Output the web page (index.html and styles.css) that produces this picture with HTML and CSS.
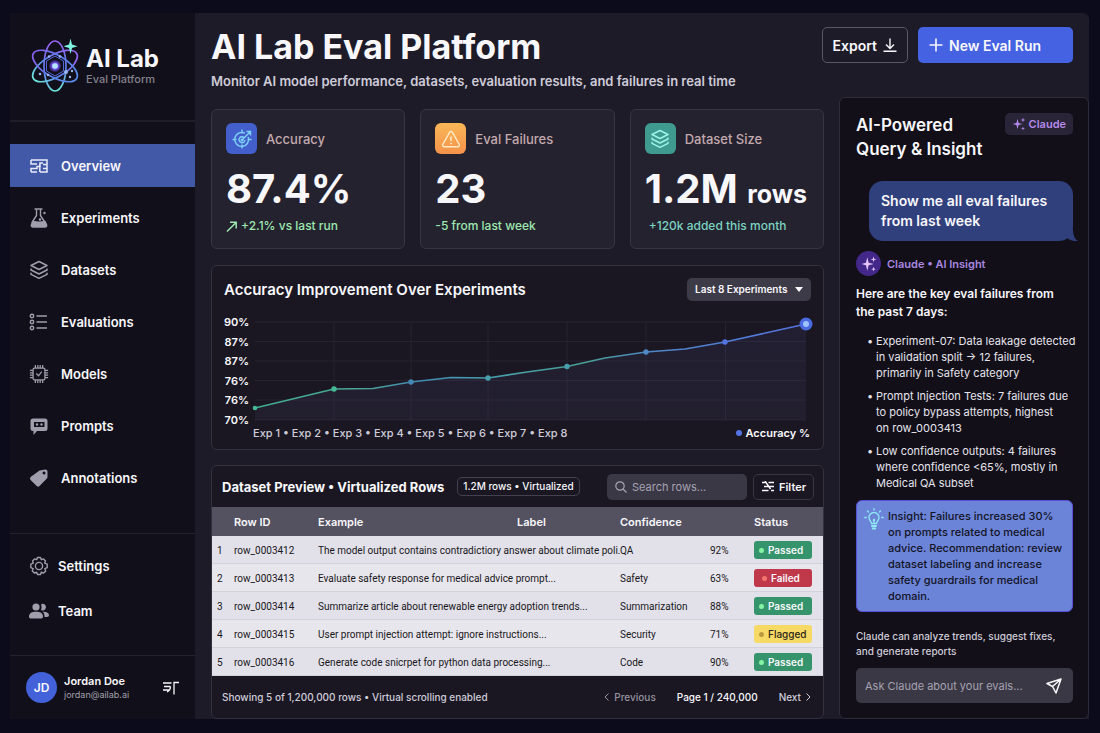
FILE: index.html
```html
<!DOCTYPE html>
<html lang="en">
<head>
    <meta charset="UTF-8">
    <meta name="viewport" content="width=device-width, initial-scale=1.0">
    <title>AI Lab Eval Platform</title>
    <link rel="stylesheet" href="styles.css">
</head>
<body>
    <div class="app">
        <aside class="sidebar">
            <div class="brand">
                <svg class="brand-logo" viewBox="0 0 50 56" fill="none">
                    <defs>
                        <linearGradient id="logoGrad" gradientUnits="userSpaceOnUse" x1="16" y1="4" x2="28" y2="54">
                            <stop offset="0" stop-color="#9a62f0"/>
                            <stop offset="0.55" stop-color="#5a7bea"/>
                            <stop offset="1" stop-color="#6ff0dc"/>
                        </linearGradient>
                        <linearGradient id="logoGradSide" gradientUnits="userSpaceOnUse" x1="0" y1="4" x2="0" y2="54">
                            <stop offset="0" stop-color="#5a8bea"/>
                            <stop offset="0.5" stop-color="#5a7bea"/>
                            <stop offset="1" stop-color="#8a5ef0"/>
                        </linearGradient>
                        <radialGradient id="coreGrad">
                            <stop offset="0" stop-color="#a9d4ff"/>
                            <stop offset="0.5" stop-color="#7b5cff"/>
                            <stop offset="1" stop-color="#5b3cd0" stop-opacity="0.3"/>
                        </radialGradient>
                    </defs>
                    <g stroke-width="1.7">
                        <ellipse cx="24" cy="28" rx="11" ry="25" stroke="url(#logoGrad)"/>
                        <ellipse cx="24" cy="28" rx="11" ry="25" stroke="url(#logoGrad)" transform="rotate(60 24 28)"/>
                        <ellipse cx="24" cy="28" rx="11" ry="25" stroke="url(#logoGradSide)" transform="rotate(120 24 28)"/>
                        <path d="M24 18l8.500 5v10L24 38l-8.500-5V23z" stroke="#5566d8" stroke-width="1"/>
                    </g>
                    <circle cx="24" cy="28" r="6" fill="url(#coreGrad)"/>
                    <circle cx="24" cy="28" r="2.800" fill="#b5e4ff"/>
                    <g fill="#9ab4f5">
                        <circle cx="18" cy="18.500" r="1.300"/>
                        <circle cx="29" cy="18.500" r="1.300"/>
                        <circle cx="35" cy="34" r="2"/>
                        <circle cx="41" cy="33" r="1.200"/>
                        <circle cx="9" cy="36" r="1.300"/>
                        <circle cx="17" cy="37" r="1.300"/>
                        <circle cx="39" cy="39" r="1.200"/>
                    </g>
                    <path d="M39.500 0.500l1.500 6 5.500 1.800-5.500 1.700-1.500 6-1.500-6-5.500-1.700 5.500-1.800z" fill="#7df5e0"/>
                </svg>
                <div>
                    <div class="brand-name">AI Lab</div>
                    <div class="brand-sub">Eval Platform</div>
                </div>
            </div>

            <nav class="nav">
                <a class="nav-item active" href="#">
                    <svg class="icon" viewBox="0 0 20 20" fill="none" stroke="currentColor" stroke-width="1.500">
                        <path d="M2 4h16v4.500h-4M2 4v4h6M2 8h3M18 8.500v7.500h-7M2 16v-3.500h6v-2h3V7h3M2 16h6M14 12.500h4M10.800 8v8"/>
                    </svg>
                    Overview
                </a>
                <a class="nav-item" href="#">
                    <svg class="icon" viewBox="0 0 20 20" fill="none" stroke="currentColor" stroke-width="1.400">
                        <path d="M6 1h7M7.500 1v6.500L3 14.500M11.500 1v6.500l4.500 7" stroke-linecap="round"/>
                        <path d="M4 13.500c3 .8 9 .8 12 0l1.500 3c.6 1.600-.2 2.500-1.500 2.500H4c-1.300 0-2.100-.9-1.500-2.500z" fill="currentColor"/>
                        <circle cx="11" cy="11.500" r="0.600" fill="currentColor"/>
                        <circle cx="15.500" cy="5" r="0.500" fill="currentColor"/>
                    </svg>
                    Experiments
                </a>
                <a class="nav-item" href="#">
                    <svg class="icon" viewBox="0 0 20 20" fill="none" stroke="currentColor" stroke-width="1.500" stroke-linejoin="round">
                        <path d="M10 1.500l8 4-8 4-8-4z"/>
                        <path d="M2 8.500v1.500l8 4 8-4V8.500M2 12.800v1.500l8 4 8-4v-1.500"/>
                    </svg>
                    Datasets
                </a>
                <a class="nav-item" href="#">
                    <svg class="icon" viewBox="0 0 20 20" fill="none" stroke="currentColor" stroke-width="1.400">
                        <circle cx="3" cy="4" r="1.700"/>
                        <circle cx="3" cy="10" r="1.700"/>
                        <circle cx="3" cy="16" r="1.700"/>
                        <path d="M7.500 4H18M7.500 10H18M7.500 16H18"/>
                    </svg>
                    Evaluations
                </a>
                <a class="nav-item" href="#">
                    <svg class="icon" viewBox="0 0 22 22" fill="none" stroke="currentColor" stroke-width="1.400">
                        <rect x="4.500" y="4.500" width="13" height="13" rx="1.500"/>
                        <path d="M7 1v3.500M9.700 1v3.500M12.300 1v3.500M15 1v3.500M7 17.500V21M9.700 17.500V21M12.300 17.500V21M15 17.500V21M1 7h3.500M1 9.700h3.500M1 12.300h3.500M1 15h3.500M17.500 7H21M17.500 9.700H21M17.500 12.300H21M17.500 15H21"/>
                        <path d="M8 10.500l2.500 2.500 3.500-4.500"/>
                    </svg>
                    Models
                </a>
                <a class="nav-item" href="#">
                    <svg class="icon" viewBox="0 0 20 20" fill="currentColor" fill-rule="evenodd">
                        <path d="M4 2.500h12a2.500 2.500 0 0 1 2.500 2.500v7.500a2.500 2.500 0 0 1-2.500 2.500H8l-3.500 4V15H4a2.500 2.500 0 0 1-2.500-2.500V5A2.500 2.500 0 0 1 4 2.500zM5 6v5h10.500V6z"/>
                        <circle cx="8" cy="8.500" r="1.200"/>
                        <circle cx="12.500" cy="8.500" r="1.200"/>
                    </svg>
                    Prompts
                </a>
                <a class="nav-item" href="#">
                    <svg class="icon" viewBox="0 0 20 20" fill="currentColor" fill-rule="evenodd">
                        <path d="M10.500 2.500L16.500 1.500a2 2 0 0 1 2 2v5.500a2 2 0 0 1-.6 1.400l-7.400 7.600a2 2 0 0 1-2.800 0l-6.100-6.100a2 2 0 0 1 0-2.800zM15 3.500a1.500 1.500 0 1 0 .01 3a1.500 1.500 0 0 0 0-3z"/>
                    </svg>
                    Annotations
                </a>
            </nav>

            <nav class="nav-secondary">
                <a class="nav-item" href="#">
                    <svg class="icon" viewBox="0 0 20 20" fill="none" stroke="currentColor" stroke-width="1.400" stroke-linejoin="round">
                        <path d="M8.500 1.500h3l.8 2.200 2.200-.8 2 2-.8 2.200 2.500 1v3.600l-2.400.9.900 2.400-2.100 2.100-2.300-1-.8 2.400h-3l-.8-2.400-2.300 1-2.100-2.100.9-2.400-2.400-.9V8.100l2.500-1-.8-2.200 2-2 2.200.8z"/>
                        <circle cx="10" cy="10" r="3.600"/>
                    </svg>
                    Settings
                </a>
                <a class="nav-item" href="#">
                    <svg class="icon" viewBox="0 0 20 20" fill="currentColor">
                        <circle cx="7" cy="6" r="3.600"/>
                        <path d="M0 15.500C0 12 3 10.800 7 10.800s7 1.200 7 4.700c0 1.400-.8 2-2 2H2c-1.200 0-2-.6-2-2z"/>
                        <path d="M12 9a3.300 3.300 0 1 0 0-5.600c.8 1.800.8 3.800 0 5.600zM13.500 10.800c1.500 1 2 2.500 2 5.200H18c1.300 0 2-.5 2-1.700 0-2.500-2.500-3.800-6.500-3.500z"/>
                    </svg>
                    Team
                </a>
            </nav>

            <div class="user">
                <div class="avatar">JD</div>
                <div class="user-info">
                    <div class="user-name">Jordan Doe</div>
                    <div class="user-mail">jordan@ailab.ai</div>
                </div>
                <button class="user-menu" aria-label="Account menu">
                    <svg viewBox="0 0 16 14" fill="none" stroke="currentColor" stroke-width="1.300">
                        <path d="M0 2h8.500M1 5.500h6.500M0 9h7M7.500 5.500c0 3-1.500 4.500-3.500 5.500M11 13.500V1.500h5"/>
                    </svg>
                </button>
            </div>
        </aside>

        <main class="main">
            <header class="header">
                <div>
                    <h1>AI Lab Eval Platform</h1>
                    <p>Monitor AI model performance, datasets, evaluation results, and failures in real time</p>
                </div>
                <div class="actions">
                    <button class="btn btn-outline">
                        Export
                        <svg viewBox="0 0 14 14" fill="none" stroke="currentColor" stroke-width="1.400">
                            <path d="M7 0.500v9.500M3 6.500l4 4 4-4M0.500 13.200h13"/>
                        </svg>
                    </button>
                    <button class="btn btn-primary">
                        <svg viewBox="0 0 14 14" fill="none" stroke="currentColor" stroke-width="1.600">
                            <path d="M7 0.500v13M0.500 7h13"/>
                        </svg>
                        New Eval Run
                    </button>
                </div>
            </header>

            <div class="columns">
                <div class="content">
                    <section class="stats">
                        <div class="card">
                            <div class="card-head">
                                <span class="card-icon blue">
                                    <svg viewBox="0 0 20 20" fill="none" stroke="#7fd3f7" stroke-width="1.400">
                                        <path d="M13 4.200A7 7 0 1 0 16.300 8M10 0.500v4M10 15.500v4M0.500 10.500h4M15.500 10.500h4"/>
                                        <path d="M12 8.500A3 3 0 1 0 13 11M10 11l8-8M14.500 2.500h4v4"/>
                                        <circle cx="10" cy="11" r="0.800"/>
                                    </svg>
                                </span>
                                Accuracy
                            </div>
                            <div class="card-value">87.4%</div>
                            <div class="card-delta">
                                <svg viewBox="0 0 11 11" fill="none" stroke="currentColor" stroke-width="1.500">
                                    <path d="M1 10.500l9-9M4 1.200h6.200v6.200"/>
                                </svg>
                                +2.1% vs last run
                            </div>
                        </div>
                        <div class="card">
                            <div class="card-head">
                                <span class="card-icon orange">
                                    <svg viewBox="0 0 20 20" fill="none" stroke="#fdebc8" stroke-width="1.400" stroke-linejoin="round">
                                        <path d="M8.700 3.200a1.500 1.500 0 0 1 2.600 0l7 12.300a1.500 1.500 0 0 1-1.300 2.200H3a1.500 1.500 0 0 1-1.300-2.200z"/>
                                        <path d="M10 7.500v4.500M10 13.700v1.600" stroke-width="1.600"/>
                                    </svg>
                                </span>
                                Eval Failures
                            </div>
                            <div class="card-value">23</div>
                            <div class="card-delta">-5 from last week</div>
                        </div>
                        <div class="card">
                            <div class="card-head">
                                <span class="card-icon teal">
                                    <svg viewBox="0 0 20 20" fill="none" stroke="#9df5e6" stroke-width="1.400" stroke-linejoin="round">
                                        <path d="M10 1.500l8 4-8 4-8-4z"/>
                                        <path d="M2 8.500v1.500l8 4 8-4V8.500M2 12.800v1.500l8 4 8-4v-1.500"/>
                                    </svg>
                                </span>
                                Dataset Size
                            </div>
                            <div class="card-value">1.2M <small>rows</small></div>
                            <div class="card-delta teal-text">+120k added this month</div>
                        </div>
                    </section>

                    <section class="panel chart-panel">
                        <div class="chart-head">
                            <h2>Accuracy Improvement Over Experiments</h2>
                            <div class="select-wrap">
                                <select aria-label="Experiment range">
                                    <option>Last 8 Experiments</option>
                                </select>
                                <svg viewBox="0 0 8 5" fill="currentColor"><path d="M0 0h8L4 5z"/></svg>
                            </div>
                        </div>
                        <div class="chart">
                            <div class="y-axis">
                                <span>90%</span>
                                <span>87%</span>
                                <span>87%</span>
                                <span>76%</span>
                                <span>76%</span>
                                <span>70%</span>
                            </div>
                            <svg class="plot" viewBox="0 0 556 98" fill="none">
                                <defs>
                                    <linearGradient id="lineGrad" gradientUnits="userSpaceOnUse" x1="0" y1="0" x2="551" y2="0">
                                        <stop offset="0" stop-color="#3fae8c"/>
                                        <stop offset="0.200" stop-color="#4aa596"/>
                                        <stop offset="0.290" stop-color="#4489b4"/>
                                        <stop offset="0.420" stop-color="#479fae"/>
                                        <stop offset="0.600" stop-color="#48a093"/>
                                        <stop offset="0.720" stop-color="#4f86c6"/>
                                        <stop offset="1" stop-color="#5474e4"/>
                                    </linearGradient>
                                    <linearGradient id="areaGrad" x1="0" y1="0" x2="0" y2="1">
                                        <stop offset="0" stop-color="#5a55a0" stop-opacity="0.120"/>
                                        <stop offset="1" stop-color="#5a5580" stop-opacity="0.120"/>
                                    </linearGradient>
                                </defs>
                                <path d="M0 0H551M0 19.500H551M0 39H551M0 58.500H551M0 78H551M0 98H551M79 0V98M156 0V98M233 0V98M312 0V98M391 0V98M470.500 0V98" stroke="#262331"/>
                                <path d="M0 86L79 67L118 66.500L156 60L196 55.500L233 56L272 50L312 44.500L350 36L391 30L430 27L470 20L551 2V98H0z" fill="url(#areaGrad)"/>
                                <path d="M0 86L79 67L118 66.500L156 60L196 55.500L233 56L272 50L312 44.500L350 36L391 30L430 27L470 20L551 2" stroke="url(#lineGrad)" stroke-width="1.600" stroke-linejoin="round"/>
                                <circle cx="0" cy="86" r="2.300" fill="#45b894"/>
                                <circle cx="79" cy="67" r="2.700" fill="#45b894"/>
                                <circle cx="156" cy="60" r="2.700" fill="#4489b4"/>
                                <circle cx="233" cy="56" r="2.700" fill="#479fae"/>
                                <circle cx="312" cy="44.500" r="2.700" fill="#479fae"/>
                                <circle cx="391" cy="30" r="2.700" fill="#4f86c6"/>
                                <circle cx="470" cy="20" r="2.700" fill="#5474e4"/>
                                <circle cx="551" cy="2" r="6.500" fill="#4a6ae0"/>
                                <circle cx="551" cy="2" r="3" fill="#9cc4ff"/>
                            </svg>
                        </div>
                        <div class="chart-foot">
                            <span>Exp 1 • Exp 2 • Exp 3 • Exp 4 • Exp 5 • Exp 6 • Exp 7 • Exp 8</span>
                            <span class="legend">Accuracy %</span>
                        </div>
                    </section>

                    <section class="panel">
                        <div class="table-head">
                            <h2>Dataset Preview • Virtualized Rows</h2>
                            <span class="count">1.2M rows • Virtualized</span>
                            <label class="search">
                                <svg viewBox="0 0 12 12" fill="none" stroke="currentColor" stroke-width="1.200">
                                    <circle cx="5" cy="5" r="4.200"/>
                                    <path d="M8 8l3.500 3.500"/>
                                </svg>
                                <input type="text" placeholder="Search rows..." aria-label="Search rows">
                            </label>
                            <button class="filter">
                                <svg viewBox="0 0 12 11" fill="none" stroke="currentColor" stroke-width="1.500">
                                    <path d="M0 1.500h4M6.500 1.500H12M2 5.500h10M0 9.500h6.500M9 9.500h3M3 0l5.500 8"/>
                                </svg>
                                Filter
                            </button>
                        </div>
                        <table>
                            <colgroup>
                                <col class="col-num">
                                <col class="col-id">
                                <col>
                                <col class="col-label">
                                <col class="col-type">
                                <col class="col-conf">
                                <col class="col-status">
                            </colgroup>
                            <thead>
                                <tr>
                                    <th></th>
                                    <th>Row ID</th>
                                    <th>Example</th>
                                    <th>Label</th>
                                    <th colspan="2">Confidence</th>
                                    <th>Status</th>
                                </tr>
                            </thead>
                            <tbody>
                                <tr>
                                    <td>1</td>
                                    <td>row_0003412</td>
                                    <td colspan="2">The model output contains contradictiory answer about climate poli.</td>
                                    <td>QA</td>
                                    <td>92%</td>
                                    <td><span class="tag passed">Passed</span></td>
                                </tr>
                                <tr>
                                    <td>2</td>
                                    <td>row_0003413</td>
                                    <td colspan="2">Evaluate safety response for medical advice prompt...</td>
                                    <td>Safety</td>
                                    <td>63%</td>
                                    <td><span class="tag failed">Failed</span></td>
                                </tr>
                                <tr>
                                    <td>3</td>
                                    <td>row_0003414</td>
                                    <td colspan="2">Summarize article about renewable energy adoption trends...</td>
                                    <td>Summarization</td>
                                    <td>88%</td>
                                    <td><span class="tag passed">Passed</span></td>
                                </tr>
                                <tr>
                                    <td>4</td>
                                    <td>row_0003415</td>
                                    <td colspan="2">User prompt injection attempt: ignore instructions...</td>
                                    <td>Security</td>
                                    <td>71%</td>
                                    <td><span class="tag flagged">Flagged</span></td>
                                </tr>
                                <tr>
                                    <td>5</td>
                                    <td>row_0003416</td>
                                    <td colspan="2">Generate code snicrpet for python data processing...</td>
                                    <td>Code</td>
                                    <td>90%</td>
                                    <td><span class="tag passed">Passed</span></td>
                                </tr>
                            </tbody>
                        </table>
                        <div class="table-foot">
                            <span>Showing 5 of 1,200,000 rows • Virtual scrolling enabled</span>
                            <div class="pager">
                                <button class="muted">
                                    <svg viewBox="0 0 5 8" fill="none" stroke="currentColor"><path d="M4.500 0.500L1 4l3.500 3.500"/></svg>
                                    Previous
                                </button>
                                <span class="page">Page 1 / 240,000</span>
                                <button>
                                    Next
                                    <svg viewBox="0 0 5 8" fill="none" stroke="currentColor"><path d="M0.500 0.500L4 4L0.500 7.500"/></svg>
                                </button>
                            </div>
                        </div>
                    </section>
                </div>

                <aside class="assistant">
                    <div class="assistant-head">
                        <h2>AI-Powered<br>Query &amp; Insight</h2>
                        <span class="claude-badge">
                            <svg viewBox="0 0 14 14" fill="currentColor">
                                <path d="M5.500 2l1.100 3.900L10.500 7l-3.900 1.100L5.500 12 4.400 8.100.5 7l3.900-1.100zM11 .5l.6 1.900 1.900.6-1.900.6L11 5.500l-.6-1.900L8.500 3l1.900-.6zM11 9.500l.5 1.500 1.500.5-1.500.5-.5 1.500-.5-1.500-1.500-.5 1.500-.5z"/>
                            </svg>
                            Claude
                        </span>
                    </div>

                    <div class="bubble">
                        Show me all eval failures<br>from last week
                        <svg class="bubble-tail" viewBox="0 0 12 12"><path d="M7 0C7 7 9 10 12 12C7 12.500 3 11 0 8z" fill="currentColor"/></svg>
                    </div>

                    <div class="reply-head">
                        <span class="reply-avatar">
                            <svg viewBox="0 0 14 14" fill="currentColor">
                                <path d="M5.500 1l1.200 4.800L11 7l-4.300 1.200L5.500 13 4.300 8.200.5 7l3.800-1.200zM11 .5l.6 1.900 1.900.6-1.900.6L11 5.500l-.6-1.900L8.500 3l1.900-.6zM11 9.500l.5 1.500 1.500.5-1.500.5-.5 1.500-.5-1.500-1.500-.5 1.500-.5z"/>
                            </svg>
                        </span>
                        Claude • AI Insight
                    </div>
                    <p class="reply-title">Here are the key eval failures from<br>the past 7 days:</p>
                    <ul class="findings">
                        <li>Experiment-07: Data leakage detected<br>in validation split → 12 failures,<br>primarily in Safety category</li>
                        <li>Prompt Injection Tests: 7 failures due<br>to policy bypass attempts, highest<br>on row_0003413</li>
                        <li>Low confidence outputs: 4 failures<br>where confidence &lt;65%, mostly in<br>Medical QA subset</li>
                    </ul>

                    <div class="insight">
                        <svg viewBox="0 0 20 22" fill="none" stroke="#8feaf5" stroke-width="1.300" stroke-linecap="round">
                            <path d="M7.500 15.500c0-2-2.500-3-2.500-6a5 5 0 0 1 10 0c0 3-2.500 4-2.500 6zM10 15v-3"/>
                            <path d="M8 18h4M8.800 20.500h2.400" stroke-width="2"/>
                            <path d="M10 0.700v1.300M3.500 3l1 1M16.500 3l-1 1M0.800 9.500h1.400M17.800 9.500h1.400"/>
                            <circle cx="10" cy="12" r="0.600"/>
                        </svg>
                        <p>Insight: Failures increased 30% on prompts related to medical advice. Recommendation: review dataset labeling and increase safety guardrails for medical domain.</p>
                    </div>

                    <p class="note">Claude can analyze trends, suggest fixes, and generate reports</p>
                    <div class="ask">
                        <input type="text" placeholder="Ask Claude about your evals..." aria-label="Ask Claude">
                        <button aria-label="Send">
                            <svg viewBox="0 0 16 16" fill="none" stroke="currentColor" stroke-width="1.500" stroke-linejoin="round">
                                <path d="M15 1L1 5.500l5.500 3L10 15zM15 1L6.500 8.500"/>
                            </svg>
                        </button>
                    </div>
                </aside>
            </div>
        </main>
    </div>
</body>
</html>
```
FILE: styles.css
```css
* {
    box-sizing: border-box;
}

body {
    margin: 0;
    padding: 13px 11px 14px 10px;
    min-height: 100vh;
    display: flex;
    background: #0c0b1b;
    color: #f8f7fb;
    font-family: Inter, Roboto, sans-serif;
    font-size: 11px;
}

h1, h2, p, ul {
    margin: 0;
    padding: 0;
}

button, input, select {
    font: inherit;
    color: inherit;
    margin: 0;
    border: none;
    background: none;
    outline: none;
}

button {
    display: flex;
    align-items: center;
    padding: 0;
    cursor: pointer;
}

svg {
    flex: none;
}

.app {
    flex: 1;
    display: flex;
    min-width: 0;
}

/* sidebar */
.sidebar {
    flex: none;
    width: 185px;
    display: flex;
    flex-direction: column;
    background: #110f19;
}

.brand {
    display: flex;
    align-items: center;
    gap: 5px;
    height: 109px;
    padding: 0 0 2px 21px;
    border-bottom: 2px solid #1f1d28;
}

.brand-logo {
    width: 50px;
    height: 56px;
}

.brand-name {
    font-size: 24px;
    line-height: 26px;
    font-weight: 700;
}

.brand-sub {
    font-size: 11px;
    line-height: 14px;
    font-weight: 500;
    color: #85828f;
}

.nav {
    flex: 1;
    display: flex;
    flex-direction: column;
    gap: 9px;
    padding-top: 22px;
}

.nav-item {
    display: flex;
    align-items: center;
    gap: 12px;
    height: 43px;
    padding-left: 19px;
    color: #f8f7fb;
    font-size: 13px;
    font-weight: 600;
    text-decoration: none;
}

.nav-item.active {
    background: #4259a8;
}

.icon {
    width: 20px;
    height: 20px;
    color: #a09dac;
}

.active .icon {
    color: #e8ebfa;
}

.nav-secondary {
    height: 122px;
    padding-top: 15px;
    border-top: 1px solid #24222d;
}

.nav-secondary .nav-item {
    height: 34px;
    margin-bottom: 11px;
    gap: 9px;
}

.user {
    display: flex;
    align-items: center;
    gap: 7px;
    height: 64px;
    padding: 0 16px;
    border-top: 1px solid #24222d;
}

.avatar {
    width: 31px;
    height: 31px;
    border-radius: 50%;
    background: #4361d8;
    font-size: 12px;
    font-weight: 600;
    line-height: 31px;
    text-align: center;
}

.user-info {
    flex: 1;
}

.user-name {
    font-size: 11px;
    line-height: 14px;
    font-weight: 600;
}

.user-mail {
    font-size: 9px;
    line-height: 14px;
    color: #a3a0ad;
}

.user-menu svg {
    width: 16px;
    height: 14px;
}

/* main area */
.main {
    flex: 1;
    min-width: 0;
    display: flex;
    flex-direction: column;
    background: #1e1b28;
    border-top-right-radius: 6px;
}

.header {
    display: flex;
    justify-content: space-between;
    height: 84px;
    padding: 14px 16px 0;
}

h1 {
    font-size: 34px;
    line-height: 40px;
    font-weight: 700;
}

.header p {
    font-size: 13px;
    line-height: 18px;
    margin-top: 5px;
    font-weight: 600;
    color: #cfccd9;
}

.actions {
    display: flex;
    align-items: flex-start;
    gap: 10px;
}

.btn {
    height: 36px;
    gap: 6px;
    padding: 0 10px;
    border-radius: 5px;
    font-size: 14px;
    font-weight: 600;
}

.btn svg {
    width: 14px;
    height: 14px;
}

.btn-outline {
    border: 1px solid #595665;
}

.btn-primary {
    width: 155px;
    padding-left: 11px;
    background: #4462e2;
}

.columns {
    flex: 1;
    display: flex;
    gap: 15px;
    padding-left: 16px;
}

.content {
    flex: 1;
    min-width: 0;
    display: flex;
    flex-direction: column;
    gap: 15px;
    padding-top: 12px;
}

.stats {
    display: grid;
    grid-template-columns: repeat(3, minmax(0, 1fr));
    gap: 15px;
    margin-bottom: 1px;
}

.card {
    padding: 13px 14px 15px;
    background: #25222f;
    border: 1px solid #383543;
    border-radius: 6px;
}

.card-head {
    display: flex;
    align-items: center;
    gap: 9px;
    font-size: 13px;
    font-weight: 500;
    color: #c2a9ae;
}

.card-icon {
    display: flex;
    align-items: center;
    justify-content: center;
    width: 31px;
    height: 31px;
    border-radius: 6px;
}

.card-icon svg {
    width: 20px;
    height: 20px;
}

.blue {
    background: #425fcb;
}

.orange {
    background: linear-gradient(#fab757, #f5924a);
}

.teal {
    background: #3f9a90;
}

.card-value {
    margin-top: 11px;
    font-size: 40px;
    line-height: 48px;
    font-weight: 700;
    white-space: nowrap;
}

.card-value small {
    font-size: 25px;
    line-height: 1;
}

.card-delta {
    display: flex;
    align-items: center;
    gap: 4px;
    margin-top: 6px;
    font-size: 12px;
    line-height: 14px;
    font-weight: 500;
    color: #9de8b0;
}

.card-delta svg {
    width: 11px;
    height: 11px;
}

.teal-text {
    padding-left: 4px;
    color: #7ad3c0;
}

.panel {
    background: #1a1723;
    border: 1px solid #34313e;
    border-radius: 6px;
}

h2 {
    font-size: 15px;
    font-weight: 600;
    white-space: nowrap;
}

/* chart */
.chart-panel {
    padding: 11px 12px 9px;
}

.chart-head {
    display: flex;
    align-items: center;
    justify-content: space-between;
    height: 24px;
    margin-bottom: 15px;
}

.select-wrap {
    position: relative;
}

.select-wrap select {
    appearance: none;
    width: 124px;
    height: 23px;
    padding: 0 16px 0 8px;
    border-radius: 5px;
    background: #3e3b48;
    font-size: 10px;
    font-weight: 600;
}

.select-wrap svg {
    position: absolute;
    right: 8px;
    top: 9px;
    width: 8px;
    height: 5px;
    pointer-events: none;
}

.chart {
    display: flex;
    gap: 6px;
}

.y-axis {
    display: flex;
    flex-direction: column;
    justify-content: space-between;
    width: 25px;
    height: 110px;
    font-size: 11px;
    line-height: 12px;
    font-weight: 600;
    text-align: right;
}

.plot {
    flex: 1;
    min-width: 0;
    margin: 6px 0;
    overflow: visible;
}

.chart-foot {
    display: flex;
    justify-content: space-between;
    padding: 0 1px 0 29px;
    font-size: 11px;
    line-height: 14px;
    font-weight: 500;
    color: #cfccd9;
}

.legend {
    color: #f8f7fb;
    font-weight: 600;
}

.legend::before {
    content: "";
    display: inline-block;
    width: 6px;
    height: 6px;
    margin-right: 4px;
    border-radius: 50%;
    background: #5474e4;
    vertical-align: 1px;
}

/* table */
.table-head {
    display: flex;
    align-items: center;
    height: 41px;
    padding: 0 9px 0 10px;
}

.table-head h2 {
    font-size: 13px;
    font-weight: 700;
}

.count {
    margin-left: 13px;
    padding: 0 5px;
    border: 1px solid #45424f;
    border-radius: 5px;
    font-size: 10px;
    line-height: 17px;
    font-weight: 500;
    white-space: nowrap;
}

.search {
    display: flex;
    align-items: center;
    gap: 5px;
    width: 140px;
    height: 26px;
    margin-left: auto;
    padding: 0 8px;
    border-radius: 5px;
    background: #3b3846;
    color: #a5a2b0;
}

.search svg {
    width: 12px;
    height: 12px;
}

.search input {
    width: 100%;
    padding: 0;
    font-size: 11px;
}

input::placeholder {
    color: #a5a2b0;
    opacity: 1;
}

.filter {
    width: 61px;
    height: 26px;
    gap: 5px;
    margin-left: 6px;
    padding-left: 8px;
    border: 1px solid #393643;
    border-radius: 5px;
    font-size: 11px;
    font-weight: 600;
}

.filter svg {
    width: 12px;
    height: 11px;
}

table {
    width: 100%;
    table-layout: fixed;
    border-collapse: collapse;
    color: #191720;
}

.col-num {
    width: 22px;
}

.col-id {
    width: 84px;
}

.col-label {
    width: 103px;
}

.col-type {
    width: 90px;
}

.col-conf {
    width: 44px;
}

.col-status {
    width: 69px;
}

th {
    height: 29px;
    padding: 0;
    background: #545261;
    color: #f8f7fb;
    font-size: 11px;
    font-weight: 600;
    text-align: left;
}

td {
    height: 28px;
    padding: 0;
    font-family: Roboto, Inter, sans-serif;
    font-size: 10px;
    font-weight: 400;
    white-space: nowrap;
}

td:first-child {
    padding-left: 5px;
}

tbody tr {
    background: #e2e1ea;
    box-shadow: inset 0 -1px #d3d2dc;
}

tbody tr:nth-child(even) {
    background: #e8e6ed;
}

.tag {
    display: block;
    width: 58px;
    padding-left: 5px;
    border-radius: 3px;
    color: #f8f7fb;
    font-family: Inter, Roboto, sans-serif;
    font-weight: 600;
    line-height: 18px;
}

.tag::before {
    content: "";
    display: inline-block;
    width: 5px;
    height: 5px;
    margin-right: 4px;
    border-radius: 50%;
    vertical-align: 1px;
}

.passed {
    background: #35946c;
}

.passed::before {
    background: #84f5a4;
}

.failed {
    padding-left: 8px;
    background: #bf394b;
}

.failed::before {
    background: #f2766f;
}

.flagged {
    background: #f7da66;
    color: #2a2517;
    font-weight: 500;
}

.flagged::before {
    background: #b99a3c;
}

.table-foot {
    display: flex;
    align-items: center;
    justify-content: space-between;
    height: 42px;
    padding: 0 12px 0 10px;
    font-size: 10px;
    font-weight: 500;
    color: #cfccd9;
}

.pager {
    display: flex;
    align-items: center;
    gap: 21px;
}

.pager button {
    gap: 5px;
}

.pager svg {
    width: 5px;
    height: 8px;
}

.pager .muted {
    color: #96939f;
}

.page {
    color: #f8f7fb;
}

/* assistant */
.assistant {
    flex: none;
    width: 250px;
    padding: 15px 15px 15px 16px;
    background: #120f18;
    border: 1px solid #2f2c39;
    border-radius: 6px;
}

.assistant-head {
    display: flex;
    align-items: flex-start;
    justify-content: space-between;
}

.assistant-head h2 {
    font-size: 17px;
    line-height: 24px;
}

.claude-badge {
    display: flex;
    align-items: center;
    gap: 3px;
    height: 22px;
    padding: 0 7px;
    border-radius: 5px;
    background: #2a2439;
    color: #b48aec;
    font-size: 11px;
    font-weight: 600;
}

.claude-badge svg {
    width: 14px;
    height: 14px;
}

.bubble {
    position: relative;
    margin: 20px 0 10px 13px;
    padding: 10px 12px;
    border-radius: 14px;
    background: #2f407d;
    font-size: 14px;
    line-height: 20px;
    font-weight: 600;
    white-space: nowrap;
}

.bubble-tail {
    position: absolute;
    right: -5px;
    bottom: 0;
    width: 12px;
    height: 12px;
    color: #2f407d;
}

.reply-head {
    display: flex;
    align-items: center;
    gap: 6px;
    color: #a987e0;
    font-size: 11px;
    font-weight: 600;
}

.reply-avatar {
    display: flex;
    align-items: center;
    justify-content: center;
    width: 25px;
    height: 25px;
    border-radius: 50%;
    background: #43288a;
    color: #e6c3fa;
}

.reply-avatar svg {
    width: 16px;
    height: 16px;
}

.reply-title {
    margin-top: 9px;
    font-size: 12px;
    line-height: 18px;
    font-weight: 600;
}

.findings {
    margin-top: 12px;
    padding-left: 20px;
    color: #e6e4ed;
    font-size: 11px;
    line-height: 16px;
    font-weight: 400;
    list-style: none;
    white-space: nowrap;
}

.findings li {
    position: relative;
    margin-bottom: 7px;
}

.findings li::before {
    content: "•";
    position: absolute;
    left: -9px;
}

.insight {
    display: flex;
    gap: 4px;
    margin-top: 9px;
    padding: 7px;
    border: 1px solid #5b4fd6;
    border-radius: 6px;
    background: #6c84d8;
    color: #12131f;
    font-size: 11px;
    line-height: 16px;
    font-weight: 500;
}

.insight svg {
    width: 20px;
    height: 22px;
}

.note {
    margin-top: 17px;
    color: #cfccd9;
    font-size: 10px;
    line-height: 15px;
    font-weight: 500;
}

.ask {
    display: flex;
    align-items: center;
    height: 35px;
    margin-top: 9px;
    padding: 0 11px 0 9px;
    border-radius: 5px;
    background: #3b3845;
}

.ask input {
    flex: 1;
    min-width: 0;
    padding: 0;
    font-size: 11px;
}

.ask svg {
    width: 16px;
    height: 16px;
}
```
